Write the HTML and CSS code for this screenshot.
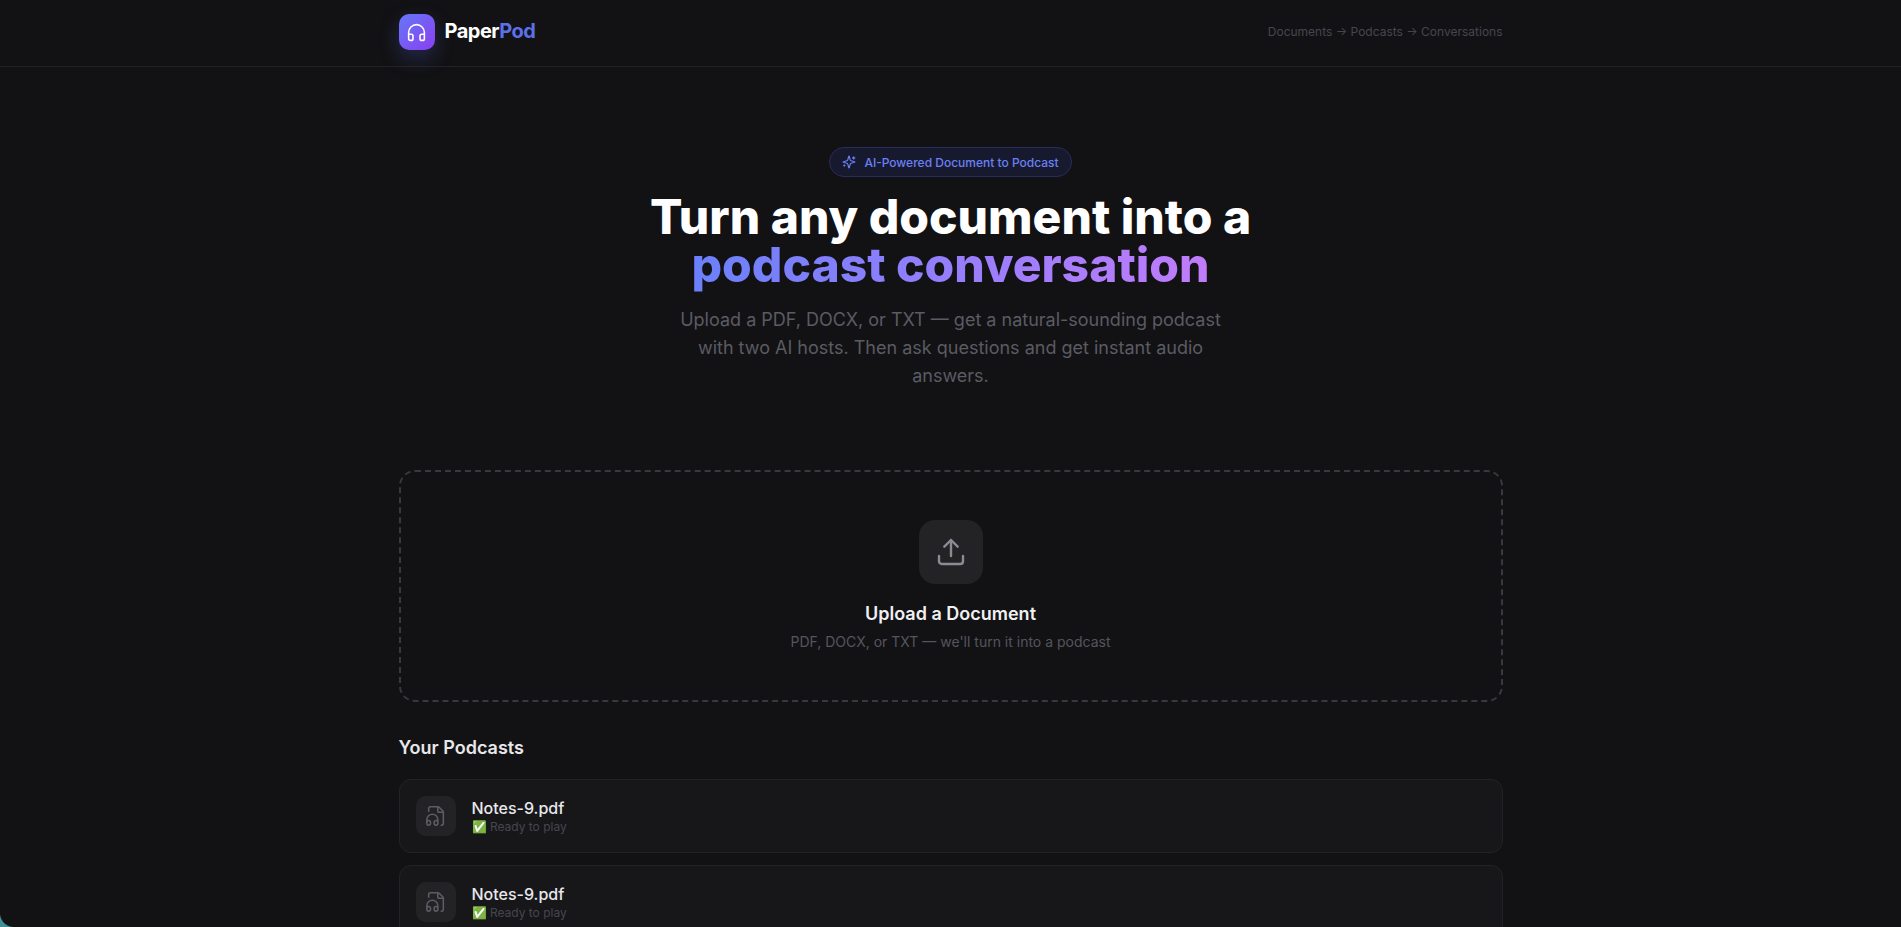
FILE: index.html
```html
<!DOCTYPE html>
<html lang="en">
<head>
    <meta charset="UTF-8">
    <meta name="viewport" content="width=device-width, initial-scale=1.0">
    <title>PaperPod</title>
    <link rel="stylesheet" href="styles.css">
</head>
<body>
    <header class="site-header">
        <div class="header-inner">
            <div class="brand">
                <div class="brand-icon">
                    <svg width="21" height="21" viewBox="0 0 24 24" fill="none" stroke="#fff" stroke-width="1.8" stroke-linecap="round" stroke-linejoin="round">
                        <path d="M3 14h3a2 2 0 0 1 2 2v3a2 2 0 0 1-2 2H5a2 2 0 0 1-2-2v-7a9 9 0 0 1 18 0v7a2 2 0 0 1-2 2h-1a2 2 0 0 1-2-2v-3a2 2 0 0 1 2-2h3"/>
                    </svg>
                </div>
                <span class="brand-name">Paper<span class="brand-accent">Pod</span></span>
            </div>
            <div class="header-note">Documents → Podcasts → Conversations</div>
        </div>
    </header>

    <main class="page">
        <section class="hero">
            <div class="hero-badge">
                <svg width="14" height="14" viewBox="0 0 24 24" fill="none" stroke="currentColor" stroke-width="2" stroke-linecap="round" stroke-linejoin="round">
                    <path d="M9.94 15.5A2 2 0 0 0 8.5 14.06l-6.14-1.58a.5.5 0 0 1 0-.96L8.5 9.94A2 2 0 0 0 9.94 8.5l1.58-6.14a.5.5 0 0 1 .96 0L14.06 8.5A2 2 0 0 0 15.5 9.94l6.14 1.58a.5.5 0 0 1 0 .96L15.5 14.06a2 2 0 0 0-1.44 1.44l-1.58 6.14a.5.5 0 0 1-.96 0z"/>
                    <path d="M20 3v4"/><path d="M22 5h-4"/><path d="M4 17v2"/><path d="M5 18H3"/>
                </svg>
                AI-Powered Document to Podcast
            </div>
            <h1 class="hero-title">Turn any document into a<br><span class="hero-gradient">podcast conversation</span></h1>
            <p class="hero-text">Upload a PDF, DOCX, or TXT — get a natural-sounding podcast with two AI hosts. Then ask questions and get instant audio answers.</p>
        </section>

        <section class="dropzone">
            <div class="dropzone-icon">
                <svg width="32" height="32" viewBox="0 0 24 24" fill="none" stroke="currentColor" stroke-width="1.8" stroke-linecap="round" stroke-linejoin="round">
                    <path d="M21 15v4a2 2 0 0 1-2 2H5a2 2 0 0 1-2-2v-4"/><path d="M17 8l-5-5-5 5"/><path d="M12 3v12"/>
                </svg>
            </div>
            <div class="dropzone-title">Upload a Document</div>
            <div class="dropzone-text">PDF, DOCX, or TXT — we'll turn it into a podcast</div>
        </section>

        <section class="podcasts">
            <h2 class="podcasts-title">Your Podcasts</h2>
            <div class="podcast-card">
                <div class="podcast-icon">
                    <svg width="22" height="22" viewBox="0 0 24 24" fill="none" stroke="currentColor" stroke-width="1.7" stroke-linecap="round" stroke-linejoin="round">
                        <path d="M4 6.835V4a2 2 0 0 1 2-2h8a2.4 2.4 0 0 1 1.706.706l3.588 3.588A2.4 2.4 0 0 1 20 8v12a2 2 0 0 1-2 2h-.343"/>
                        <path d="M14 2v5a1 1 0 0 0 1 1h5"/>
                        <path d="M2 19a2 2 0 0 1 4 0v1a2 2 0 0 1-4 0v-4a6 6 0 0 1 12 0v4a2 2 0 0 1-4 0v-1a2 2 0 0 1 4 0"/>
                    </svg>
                </div>
                <div>
                    <div class="podcast-name">Notes-9.pdf</div>
                    <div class="podcast-status">✅ Ready to play</div>
                </div>
            </div>
            <div class="podcast-card">
                <div class="podcast-icon">
                    <svg width="22" height="22" viewBox="0 0 24 24" fill="none" stroke="currentColor" stroke-width="1.7" stroke-linecap="round" stroke-linejoin="round">
                        <path d="M4 6.835V4a2 2 0 0 1 2-2h8a2.4 2.4 0 0 1 1.706.706l3.588 3.588A2.4 2.4 0 0 1 20 8v12a2 2 0 0 1-2 2h-.343"/>
                        <path d="M14 2v5a1 1 0 0 0 1 1h5"/>
                        <path d="M2 19a2 2 0 0 1 4 0v1a2 2 0 0 1-4 0v-4a6 6 0 0 1 12 0v4a2 2 0 0 1-4 0v-1a2 2 0 0 1 4 0"/>
                    </svg>
                </div>
                <div>
                    <div class="podcast-name">Notes-9.pdf</div>
                    <div class="podcast-status">✅ Ready to play</div>
                </div>
            </div>
        </section>
    </main>

    <div class="window-corner"></div>
</body>
</html>
```

FILE: styles.css
```css
html, body {
    margin: 0;
    padding: 0;
    height: 927px;
    overflow: hidden;
}
body {
    background: #121214;
    color: #fff;
    font-family: Inter, "Liberation Sans", sans-serif;
}

.site-header {
    box-sizing: border-box;
    height: 67px;
    padding: 14px 0 16px;
    border-bottom: 1px solid #222226;
}
.header-inner {
    display: flex;
    align-items: center;
    justify-content: space-between;
    max-width: 1104px;
    height: 36px;
    margin: 0 auto;
}

.brand {
    display: flex;
    align-items: center;
    gap: 10px;
}
.brand-icon {
    display: flex;
    align-items: center;
    justify-content: center;
    width: 36px;
    height: 36px;
    border-radius: 10px;
    background: linear-gradient(135deg, #6378f8, #8b3ff0);
    box-shadow: 0 8px 20px rgba(92, 108, 250, 0.25);
}
.brand-name {
    margin-bottom: 2px;
    font-size: 20px;
    font-weight: 700;
    letter-spacing: -0.5px;
}
.brand-accent {
    color: #5c70e8;
}
.header-note {
    margin-bottom: 2px;
    font-size: 12px;
    color: #46464e;
}

.page {
    max-width: 1104px;
    margin: 0 auto;
}

.hero {
    display: flex;
    flex-direction: column;
    align-items: center;
    padding-top: 80px;
    text-align: center;
}
.hero-badge {
    display: flex;
    align-items: center;
    gap: 8px;
    height: 28px;
    padding: 0 12px;
    border: 1px solid #282d5a;
    border-radius: 15px;
    background: #171a2e;
    color: #6b80f5;
    font-size: 12px;
    font-weight: 500;
}
.hero-title {
    margin: 16px 0 0;
    font-size: 48px;
    line-height: 48px;
    font-weight: 800;
}
.hero-gradient {
    background: linear-gradient(90deg, #6b80fb, #c07cfb);
    -webkit-background-clip: text;
    background-clip: text;
    color: transparent;
}
.hero-text {
    max-width: 576px;
    margin: 17px 0 0;
    color: #5b5b63;
    font-size: 18px;
    line-height: 28px;
}

.dropzone {
    display: flex;
    flex-direction: column;
    align-items: center;
    box-sizing: border-box;
    height: 232px;
    margin-top: 80px;
    padding-top: 48px;
    border: 2px dashed #38383e;
    border-radius: 16px;
}
.dropzone-icon {
    display: flex;
    align-items: center;
    justify-content: center;
    width: 64px;
    height: 64px;
    border-radius: 16px;
    background: #232326;
    color: #8b8b93;
}
.dropzone-title {
    margin-top: 19px;
    color: #f0f0f2;
    font-size: 18px;
    font-weight: 600;
}
.dropzone-text {
    margin-top: 9px;
    color: #55555d;
    font-size: 14px;
}

.podcasts {
    margin-top: 32px;
}
.podcasts-title {
    margin: 0 0 17px;
    color: #e8e8ea;
    font-size: 18px;
    line-height: 28px;
    font-weight: 600;
}
.podcast-card {
    display: flex;
    align-items: center;
    gap: 16px;
    box-sizing: border-box;
    height: 74px;
    margin-bottom: 12px;
    padding: 0 16px;
    border: 1px solid #232327;
    border-radius: 12px;
    background: #17171a;
}
.podcast-icon {
    display: flex;
    align-items: center;
    justify-content: center;
    width: 40px;
    height: 40px;
    border-radius: 10px;
    background: #232326;
    color: #5c5c64;
}
.podcast-name {
    color: #e8e8ea;
    font-size: 16px;
    line-height: 20px;
    font-weight: 500;
}
.podcast-status {
    margin-top: 1px;
    color: #46464e;
    font-size: 12px;
    line-height: 16px;
}

/* desktop showing through the rounded window corner */
.window-corner {
    position: fixed;
    left: 0;
    bottom: 0;
    width: 14px;
    height: 14px;
    background: radial-gradient(circle at 14px 0, transparent 13.5px, #3f8f94 14.5px);
}
```
